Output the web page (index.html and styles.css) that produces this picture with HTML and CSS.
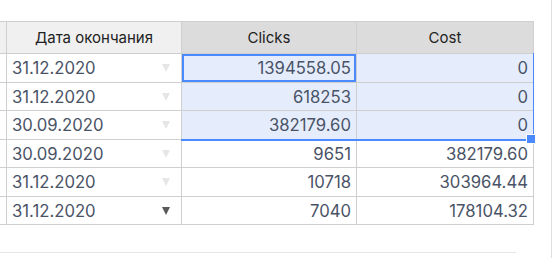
FILE: index.html
```html
<!DOCTYPE html>
<html>
<head>
<meta charset="utf-8">
<link rel="stylesheet" href="styles.css">
</head>
<body>
<div class="viewport">
  <div class="sheet">
    <table class="grid">
      <colgroup>
        <col class="c-rh"><col class="c-date"><col class="c-num"><col class="c-cost">
      </colgroup>
      <thead>
        <tr>
          <th class="rh"></th>
          <th>Дата окончания</th>
          <th class="hl">Clicks</th>
          <th class="hl">Cost</th>
        </tr>
      </thead>
      <tbody>
        <tr>
          <td class="rh"></td>
          <td class="date"><div class="dcell"><span>31.12.2020</span><i class="arrow"></i></div></td>
          <td class="num sel active">1394558.05</td>
          <td class="num sel">0</td>
        </tr>
        <tr>
          <td class="rh"></td>
          <td class="date"><div class="dcell"><span>31.12.2020</span><i class="arrow"></i></div></td>
          <td class="num sel">618253</td>
          <td class="num sel">0</td>
        </tr>
        <tr>
          <td class="rh"></td>
          <td class="date"><div class="dcell"><span>30.09.2020</span><i class="arrow"></i></div></td>
          <td class="num sel">382179.60</td>
          <td class="num sel">0</td>
        </tr>
        <tr>
          <td class="rh"></td>
          <td class="date"><div class="dcell"><span>30.09.2020</span><i class="arrow"></i></div></td>
          <td class="num">9651</td>
          <td class="num">382179.60</td>
        </tr>
        <tr>
          <td class="rh"></td>
          <td class="date"><div class="dcell"><span>31.12.2020</span><i class="arrow"></i></div></td>
          <td class="num">10718</td>
          <td class="num">303964.44</td>
        </tr>
        <tr>
          <td class="rh"></td>
          <td class="date"><div class="dcell"><span>31.12.2020</span><i class="arrow dark"></i></div></td>
          <td class="num">7040</td>
          <td class="num">178104.32</td>
        </tr>
      </tbody>
    </table>
    <div class="range"></div>
    <div class="handle"></div>
  </div>
  <div class="hscroll"></div>
</div>
</body>
</html>
```
FILE: styles.css
```css
html, body {
  margin: 0;
  padding: 0;
  background: #fff;
}
body {
  width: 552px;
  height: 258px;
  overflow: hidden;
  font-family: Inter, "Noto Sans", sans-serif;
}
.viewport {
  position: relative;
  width: 551px;
  height: 258px;
  border-right: 1px solid #dedede;
}
.sheet {
  position: relative;
  padding-top: 21px;
}
.grid {
  border-collapse: separate;
  border-spacing: 0;
  table-layout: fixed;
  width: 534px;
}
.c-rh { width: 7px; }
.c-date { width: 175px; }
.c-num { width: 175px; }
.c-cost { width: 177px; }
.grid th, .grid td {
  border-right: 1px solid #cfcfcf;
  border-bottom: 1px solid #cfcfcf;
  padding: 0 5px;
  white-space: nowrap;
  overflow: hidden;
  box-sizing: border-box;
}
.grid th {
  height: 33px;
  border-top: 1px solid #cfcfcf;
  background: #f0f0f0;
  color: #222;
  font-weight: 400;
  font-size: 15px;
  text-align: center;
}
.grid th.hl {
  background: #dcdcdc;
}
.grid th.rh, .grid td.rh {
  padding: 0;
}
.grid td {
  height: 28.5px;
  color: #4a5366;
  font-size: 16.7px;
  padding-top: 1px;
}
.grid td.rh {
  background: #fff;
}
.dcell {
  display: flex;
  align-items: center;
  justify-content: space-between;
}
.arrow {
  display: block;
  width: 0;
  height: 0;
  border-left: 4.5px solid transparent;
  border-right: 4.5px solid transparent;
  border-top: 8px solid #e6e6e6;
  margin-right: 6px;
}
.arrow.dark {
  border-top-color: #5a5a5a;
}
.num {
  text-align: right;
}
.sel {
  background: #e5edfd;
}
.active {
  box-shadow: inset 0 0 0 2px #4b89ff;
}
.range {
  position: absolute;
  left: 181px;
  top: 53px;
  width: 352px;
  height: 86px;
  border-right: 1px solid #4b89ff;
  border-bottom: 2px solid #4b89ff;
  pointer-events: none;
}
.handle {
  position: absolute;
  left: 526px;
  top: 134px;
  width: 8px;
  height: 8px;
  background: #4b89ff;
  border: 1px solid #fff;
}
.hscroll {
  position: absolute;
  left: 0;
  top: 252px;
  width: 516px;
  height: 1px;
  background: #e6e6e6;
}
```
